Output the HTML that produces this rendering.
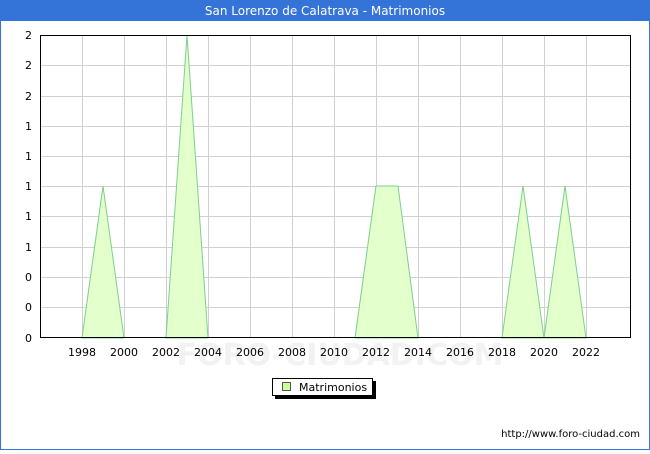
<!DOCTYPE html>
<html><head><style>
body{margin:0;width:650px;height:450px;overflow:hidden;background:#fff;font-family:"DejaVu Sans","Liberation Sans",sans-serif}
</style></head><body>
<svg width="650" height="450" xmlns="http://www.w3.org/2000/svg" font-family="DejaVu Sans, Liberation Sans, sans-serif">
<rect x="0.5" y="0.5" width="649" height="449" fill="#fff" stroke="#3473d8"/>
<rect x="0" y="0" width="650" height="21" fill="#3473d8"/>
<text x="325" y="15" fill="#fff" font-size="12" text-anchor="middle">San Lorenzo de Calatrava - Matrimonios</text>
<g stroke="#d0d0d0" stroke-width="1">
<line x1="40" y1="65.5" x2="630" y2="65.5"/><line x1="40" y1="96.5" x2="630" y2="96.5"/>
<line x1="40" y1="126.5" x2="630" y2="126.5"/><line x1="40" y1="156.5" x2="630" y2="156.5"/>
<line x1="40" y1="186.5" x2="630" y2="186.5"/><line x1="40" y1="216.5" x2="630" y2="216.5"/>
<line x1="40" y1="247.5" x2="630" y2="247.5"/><line x1="40" y1="277.5" x2="630" y2="277.5"/>
<line x1="40" y1="307.5" x2="630" y2="307.5"/>
<line x1="82.5" y1="35" x2="82.5" y2="338"/><line x1="124.5" y1="35" x2="124.5" y2="338"/>
<line x1="166.5" y1="35" x2="166.5" y2="338"/><line x1="208.5" y1="35" x2="208.5" y2="338"/>
<line x1="250.5" y1="35" x2="250.5" y2="338"/><line x1="292.5" y1="35" x2="292.5" y2="338"/>
<line x1="334.5" y1="35" x2="334.5" y2="338"/><line x1="376.5" y1="35" x2="376.5" y2="338"/>
<line x1="418.5" y1="35" x2="418.5" y2="338"/><line x1="460.5" y1="35" x2="460.5" y2="338"/>
<line x1="502.5" y1="35" x2="502.5" y2="338"/><line x1="544.5" y1="35" x2="544.5" y2="338"/>
<line x1="586.5" y1="35" x2="586.5" y2="338"/>
</g>
<text x="340" y="365" fill="#f2f2f2" font-size="30" text-anchor="middle" font-weight="bold">FORO-CIUDAD.COM</text>
<g fill="#e3ffcc" stroke="#7ccf8f" stroke-width="1">
<polygon points="82,338 103,186 124,338"/>
<polygon points="166,338 187,35 208,338"/>
<polygon points="355,338 376,186 398,186 418,338"/>
<polygon points="502,338 523,186 544,338"/>
<polygon points="544,338 565,186 586,338"/>
</g>
<rect x="40.5" y="35.5" width="590" height="302" fill="none" stroke="#000"/>
<g font-size="11" fill="#000" text-anchor="end">
<text x="32" y="39">2</text><text x="32" y="69">2</text><text x="32" y="100">2</text>
<text x="32" y="130">1</text><text x="32" y="160">1</text><text x="32" y="190">1</text>
<text x="32" y="220">1</text><text x="32" y="251">1</text><text x="32" y="281">0</text>
<text x="32" y="311">0</text><text x="32" y="342">0</text>
</g>
<g font-size="11" fill="#000" text-anchor="middle">
<text x="82" y="356">1998</text><text x="124" y="356">2000</text><text x="166" y="356">2002</text>
<text x="208" y="356">2004</text><text x="250" y="356">2006</text><text x="292" y="356">2008</text>
<text x="334" y="356">2010</text><text x="376" y="356">2012</text><text x="418" y="356">2014</text>
<text x="460" y="356">2016</text><text x="502" y="356">2018</text><text x="544" y="356">2020</text>
<text x="586" y="356">2022</text>
</g>
<rect x="275" y="381" width="101" height="18" fill="#000"/>
<rect x="272.5" y="378.5" width="100" height="17" fill="#fff" stroke="#000"/>
<rect x="282.5" y="382.5" width="8" height="8" fill="#ccff99" stroke="#555"/>
<text x="299" y="391" font-size="11">Matrimonios</text>
<text x="640" y="437" font-size="10" text-anchor="end">http://www.foro-ciudad.com</text>
</svg>
</body></html>
